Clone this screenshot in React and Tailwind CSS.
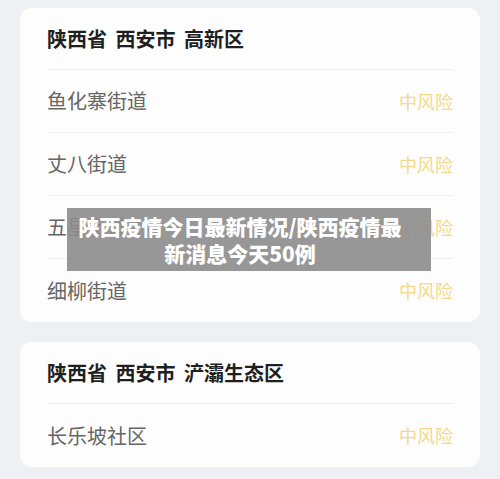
const FONT = { fontFamily: '"Noto Sans CJK SC", "Noto Sans", sans-serif' }

const GROUPS = [
  {
    title: '陕西省 西安市 高新区',
    rows: ['鱼化寨街道', '丈八街道', '五星街道', '细柳街道'],
  },
  {
    title: '陕西省 西安市 浐灞生态区',
    rows: ['长乐坡社区'],
  },
]

function Card({ title, rows }) {
  return (
    <div className="bg-[#fdfdfd] rounded-xl px-[27px]">
      <div className="h-[62px] flex items-center border-b border-[#ededed]">
        <h2 className="text-[20px] font-bold text-[#1f1f1f] pt-[1px] [word-spacing:4px]">{title}</h2>
      </div>
      {rows.map((r, i) => (
        <div
          key={r}
          className={`h-[63px] flex items-center justify-between ${i < rows.length - 1 ? 'border-b border-[#f0f0f0]' : ''}`}
        >
          <span className="text-[20px] text-[#666]">{r}</span>
          <span className="text-[18px] text-[#f2da8a]">中风险</span>
        </div>
      ))}
    </div>
  )
}

export default function App() {
  return (
    <div className="relative w-[500px] h-[479px] overflow-hidden bg-[#eff0f4] px-5 pt-2 flex flex-col gap-5" style={FONT}>
      {GROUPS.map(g => <Card key={g.title} {...g} />)}

      <div className="absolute left-[67px] top-[208px] w-[364px] h-[63px] bg-[#8c8c8c]/90 flex items-center justify-center pr-[18px]">
        <p className="text-white font-extrabold text-[21px] leading-[27px] text-center whitespace-nowrap">
          陕西疫情今日最新情况/陕西疫情最<br />新消息今天50例
        </p>
      </div>
    </div>
  )
}
